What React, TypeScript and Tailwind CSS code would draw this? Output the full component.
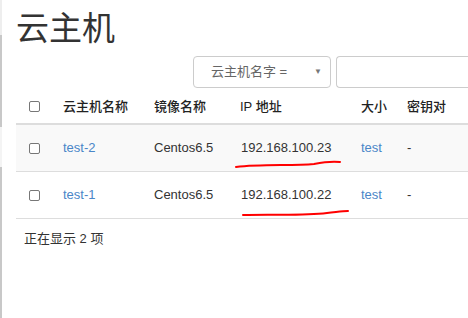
import React from 'react';

const font = { fontFamily: '"Liberation Sans", "Noto Sans CJK SC", Arial, sans-serif' };

const rows = [
  { name: 'test-2', image: 'Centos6.5', ip: '192.168.100.23', size: 'test', key: '-', mark: 'M4 42 C 30 39, 60 41, 82 39 C 92 37, 100 36, 108 37' },
  { name: 'test-1', image: 'Centos6.5', ip: '192.168.100.22', size: 'test', key: '-', mark: 'M11 43 C 40 42, 70 44, 95 41 C 105 40, 110 39, 116 39' },
];

const cols = 'grid grid-cols-[39px_91px_86px_121px_46px_1fr]';

function Box() {
  return <span className="block w-[11px] h-[11px] border border-[#777] rounded-[2px] bg-white" />;
}

export default function App() {
  return (
    <div className="flex w-[468px] h-[318px] overflow-hidden bg-white text-[#333]" style={font}>
      {/* sidebar edge */}
      <div className="flex flex-col w-[2px] shrink-0">
        <div className="h-[35px] bg-[#eeeeee]" />
        <div className="h-[92px] bg-[#c8c8c8]" />
        <div className="h-[40px] bg-[#f4f4f4]" />
        <div className="flex-1 bg-[#c8c8c8]" />
      </div>

      <div className="flex-1 pl-[14px] min-w-0">
        <h1 className="text-[33px] leading-none pt-[12px] h-[56px] font-normal">云主机</h1>

        <div className="flex gap-[5px] pl-[177px] h-[34px]">
          <div className="w-[138px] h-[32px] border border-[#ccc] rounded-[4px] flex items-center pl-[17px] pr-[8px] text-[13px] text-[#666]">
            <span className="flex-1">云主机名字 =</span>
            <span className="text-[8px] text-[#777]">▼</span>
          </div>
          <div className="flex-1 h-[32px] border border-[#ccc] rounded-l-[4px] border-r-0" />
        </div>

        <div className="text-[13px] w-[560px]">
          <div className={`${cols} h-[35px] items-center border-b-2 border-[#ddd] font-medium text-[#222]`}>
            <div className="pl-[13px]"><Box /></div>
            <div className="pl-[8px]">云主机名称</div>
            <div className="pl-[8px]">镜像名称</div>
            <div className="pl-[8px]">IP 地址</div>
            <div className="pl-[8px]">大小</div>
            <div className="pl-[8px]">密钥对</div>
          </div>
          {rows.map((r, i) => (
            <div key={r.name} className={`${cols} h-[47px] items-center border-b border-[#ddd] ${i === 0 ? 'bg-[#f9f9f9]' : ''}`}>
              <div className="pl-[13px]"><Box /></div>
              <div className="pl-[8px] text-[#4a86c8]">{r.name}</div>
              <div className="pl-[8px]">{r.image}</div>
              <div className="pl-[9px] relative h-full flex items-center">
                {r.ip}
                <svg className="absolute left-0 top-0 w-[130px] h-[47px] overflow-visible" viewBox="0 0 130 47">
                  <path d={r.mark} fill="none" stroke="#ff0000" strokeWidth="2" strokeLinecap="round" />
                </svg>
              </div>
              <div className="pl-[8px] text-[#4a86c8]">{r.size}</div>
              <div className="pl-[8px]">{r.key}</div>
            </div>
          ))}
        </div>

        <div className="text-[13px] pl-[8px] pt-[10px]">正在显示 2 项</div>
      </div>
    </div>
  );
}
